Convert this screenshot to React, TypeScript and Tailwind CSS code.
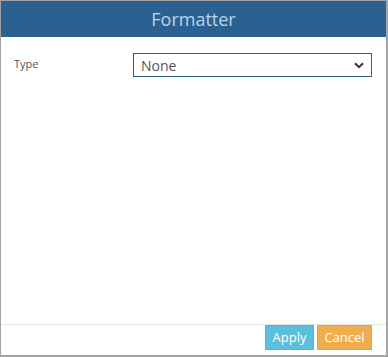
import React from "react";

export default function App() {
  return (
    <div
      className="w-[388px] h-[357px] bg-white border-l border-t border-r-2 border-b-2 border-[#a3a3a3] flex flex-col"
      style={{ fontFamily: '"Open Sans", "Noto Sans", sans-serif' }}
    >
      <div className="h-[36px] bg-[#2b6190] flex items-center justify-center">
        <span className="text-[18px] text-[#bcd3ec] leading-none">Formatter</span>
      </div>
      <div className="flex-1 flex flex-col">
        <div className="flex items-start pt-[16px]">
          <div className="w-[132px] pl-[13px] pt-[3px] text-[11px] text-[#555]">Type</div>
          <div className="w-[239px] h-[24px] border border-[#2b6190] flex items-center justify-between pl-[7px] pr-[7px]">
            <span className="text-[14px] text-[#555]">None</span>
            <svg width="10" height="7" viewBox="0 0 10 7">
              <path d="M1 1.2 L5 5.2 L9 1.2" fill="none" stroke="#333" strokeWidth="2" />
            </svg>
          </div>
        </div>
      </div>
      <div className="h-[31px] border-t border-[#e5e5e5] flex justify-end items-start gap-[3px] pr-[14px]">
        <button className="w-[49px] h-[25px] bg-[#5bc0de] border border-[#46b8da] text-white text-[13px] leading-none">
          Apply
        </button>
        <button className="w-[55px] h-[25px] bg-[#f0ad4e] border border-[#eea236] text-white text-[13px] leading-none">
          Cancel
        </button>
      </div>
    </div>
  );
}
